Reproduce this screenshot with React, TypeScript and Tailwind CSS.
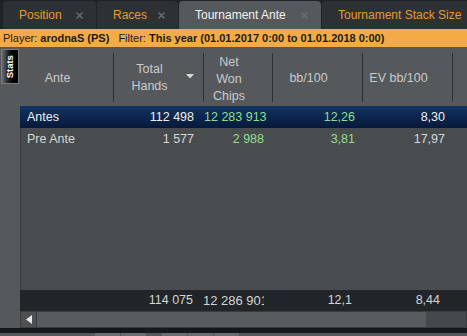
const font = { fontFamily: '"Liberation Sans", Arial, sans-serif' }

function CloseX() {
  return (
    <svg width="7" height="7" viewBox="0 0 7 7" className="shrink-0">
      <path d="M0.5 0.5 L6.5 6.5 M6.5 0.5 L0.5 6.5" stroke="#6d7073" strokeWidth="1.3" />
    </svg>
  )
}

function Tab({ label, w, active, close = true }: { label: string; w: string; active?: boolean; close?: boolean }) {
  return (
    <div
      className={`${w} h-[28px] shrink-0 rounded-t-[4px] flex items-center pl-[16px] pr-[13px] text-[12px] ${
        active ? 'bg-[#55595c] text-[#f2f2f2]' : 'bg-[#2e3134] text-[#e99a2a]'
      }`}
    >
      <span className="whitespace-nowrap">{label}</span>
      {close && (
        <span className="ml-auto">
          <CloseX />
        </span>
      )}
    </div>
  )
}

function HeaderCell({ w, children, arrow }: { w: string; children: React.ReactNode; arrow?: boolean }) {
  return (
    <div className={`${w} h-full shrink-0 flex items-center`}>
      <div className="relative flex-1 h-full flex items-center justify-center pr-[18px] pt-[3px] leading-[17px] text-center overflow-hidden">
        {children}
        {arrow && (
          <svg width="8" height="5" viewBox="0 0 8 5" className="absolute right-[9px] top-[27px]">
            <path d="M0 0 L8 0 L4 4.5 Z" fill="#d8d8d8" />
          </svg>
        )}
      </div>
      <div className="w-px h-[49px] bg-[#2c2f32] mt-[2px]" />
    </div>
  )
}

function Row({ cells, selected, green }: { cells: string[]; selected?: boolean; green?: boolean }) {
  const g = green ? 'text-[#8fdf8a]' : ''
  return (
    <div
      className={`h-[22px] flex items-center text-[12.5px] ${
        selected ? 'bg-gradient-to-b from-[#123463] to-[#07193a] text-[#f0f0f0]' : 'text-[#d6d7d8]'
      }`}
    >
      <div className="w-[94px] shrink-0 pl-[7px]">{cells[0]}</div>
      <div className="w-[90px] shrink-0 text-right pr-[10px]">{cells[1]}</div>
      <div className="w-[69px] shrink-0 pr-[5px]">
        <div className={`text-right pr-[4px] overflow-hidden whitespace-nowrap ${g}`}>
          <span className="inline-block whitespace-nowrap">{cells[2]}</span>
        </div>
      </div>
      <div className={`w-[90px] shrink-0 text-right pr-[8px] ${g}`}>{cells[3]}</div>
      <div className="w-[90px] shrink-0 text-right pr-[8px]">{cells[4]}</div>
    </div>
  )
}

export default function App() {
  return (
    <div className="w-[467px] h-[336px] overflow-hidden flex flex-col bg-[#55595c]" style={font}>
      {/* Tabs */}
      <div className="h-[29px] shrink-0 bg-[#202326] flex items-end pl-[3px] gap-px">
        <Tab label="Position" w="w-[93px]" />
        <Tab label="Races" w="w-[81px]" />
        <Tab label="Tournament Ante" w="w-[142px]" active />
        <Tab label="Tournament Stack Size" w="w-[160px]" close={false} />
      </div>

      {/* Filter bar */}
      <div className="h-[18px] shrink-0 bg-[#f3ab47] text-[#1b1b1b] text-[11px] flex items-center pl-[3px] whitespace-nowrap">
        <span>Player:&nbsp;</span>
        <span className="font-bold">arodnaS (PS)</span>
        <span className="ml-[9px]">Filter:&nbsp;</span>
        <span className="font-bold">This year (01.01.2017 0:00 to 01.01.2018 0:00)</span>
      </div>

      {/* Main */}
      <div className="h-[281px] shrink-0 flex">
        <div className="w-[20px] shrink-0 bg-[#55595c] pt-[2px] pl-[1px]">
          <div className="w-[18px] h-[35px] border border-[#7a7d80] bg-gradient-to-r from-[#6a6d70] via-[#111] to-[#000] flex items-center justify-center">
            <span className="-rotate-90 text-white text-[9.5px] font-bold leading-none">Stats</span>
          </div>
        </div>

        <div className="flex-1 flex flex-col min-w-0">
          {/* Header */}
          <div className="h-[59px] shrink-0 flex items-center bg-[#55595c] text-[#c9cacb] text-[12.5px]">
            <HeaderCell w="w-[94px]">Ante</HeaderCell>
            <HeaderCell w="w-[90px]" arrow>
              <span>
                Total
                <br />
                Hands
              </span>
            </HeaderCell>
            <HeaderCell w="w-[69px]">
              <span className="pt-[2px]">
                Net
                <br />
                Won
                <br />
                Chips
              </span>
            </HeaderCell>
            <HeaderCell w="w-[90px]">bb/100</HeaderCell>
            <HeaderCell w="w-[90px]">EV bb/100</HeaderCell>
          </div>

          {/* Body */}
          <div className="flex-1 bg-[#484c4f] shadow-[inset_1px_0_0_#3c3f42]">
            <Row cells={['Antes', '112 498', '12 283 913', '12,26', '8,30']} selected green />
            <Row cells={['Pre Ante', '1 577', '2 988', '3,81', '17,97']} green />
          </div>

          {/* Summary */}
          <div className="h-[21px] shrink-0 bg-[#222528] flex items-center text-[12.5px] text-[#d4d5d6]">
            <div className="w-[94px] shrink-0" />
            <div className="w-[90px] shrink-0 text-right pr-[11px]">114 075</div>
            <div className="w-[69px] shrink-0 pr-[5px] -ml-px">
              <div className="w-[61px] overflow-hidden whitespace-nowrap text-[13px]">12 286 901</div>
            </div>
            <div className="w-[90px] shrink-0 text-right pr-[11px] ml-px">12,1</div>
            <div className="w-[90px] shrink-0 text-right pr-[13px]">8,44</div>
          </div>

          {/* Scrollbar */}
          <div className="h-[17px] shrink-0 flex bg-[#46494c] border border-[#3a3d40]">
            <div className="w-[16px] shrink-0 flex items-center justify-center bg-[#4d5154] border-r border-[#3a3d40]">
              <svg width="6" height="9" viewBox="0 0 6 9">
                <path d="M6 0 L6 9 L0 4.5 Z" fill="#e6e6e6" />
              </svg>
            </div>
            <div className="w-[389px] shrink-0 bg-[#585c5f]" />
            <div className="flex-1" />
          </div>
        </div>
      </div>

      {/* Bottom edge */}
      <div className="h-[5px] shrink-0 bg-[#16191b]" />
      <div className="flex-1 bg-[#55595c] flex gap-px pl-[95px]">
        <div className="w-[25px] bg-[#6a6e71]" />
        <div className="w-[25px] bg-[#6a6e71]" />
        <div className="w-[14px]" />
        <div className="w-[25px] bg-[#6a6e71]" />
        <div className="w-[25px] bg-[#6a6e71]" />
        <div className="w-[25px] bg-[#6a6e71]" />
      </div>
    </div>
  )
}
